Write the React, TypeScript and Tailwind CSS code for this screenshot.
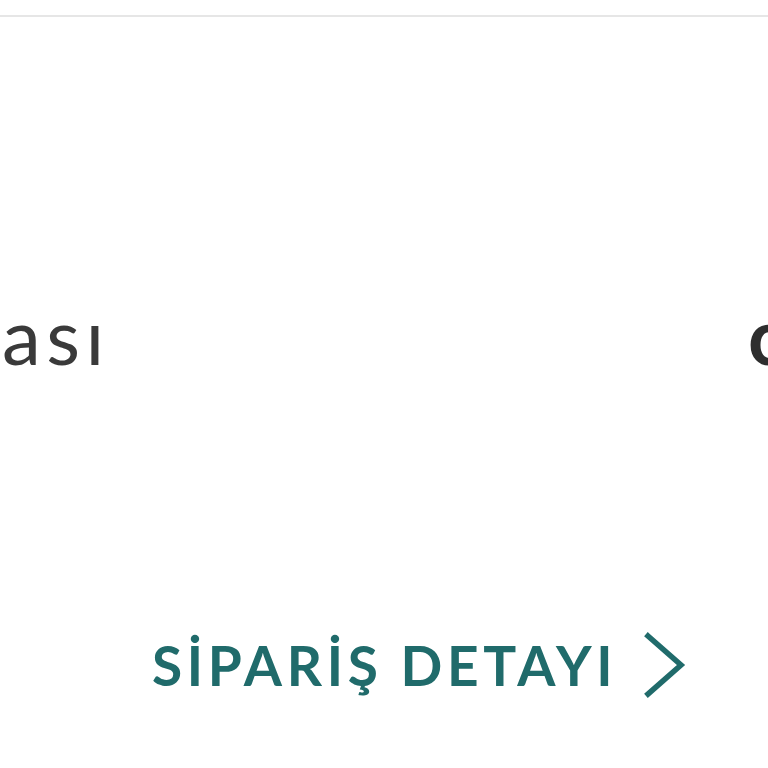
import React from 'react';

const App: React.FC = () => {
  return (
    <div className="w-[768px] h-[768px] bg-white overflow-hidden font-['Lato',sans-serif]">
      <div className="h-[15px]" />
      <div className="h-[2px] bg-[#e6e6e6]" />

      {/* label / value row */}
      <div className="mt-[278px] flex items-center justify-between h-[80px] pl-[2px]">
        <span className="text-[78px] leading-none text-[#3a3a3a] tracking-[0.07em] font-normal">ası</span>
        <span className="w-[20px] overflow-hidden flex">
          <span className="text-[78px] leading-none text-[#2e2e2e] font-bold">c</span>
        </span>
      </div>

      {/* order detail link */}
      <div className="mt-[256px] flex items-center pl-[152px] gap-[26px]">
        <span className="text-[55px] leading-none font-bold tracking-[0.085em] text-[#206b6b]">
          SİPARİŞ DETAYI
        </span>
        <svg className="w-[44px] h-[68px] text-[#206b6b]" viewBox="0 0 44 68" fill="none" stroke="currentColor" strokeWidth={5.5} strokeLinecap="square">
          <path d="M5 5 L38 34 L5 63" />
        </svg>
      </div>
    </div>
  );
};

export default App;
